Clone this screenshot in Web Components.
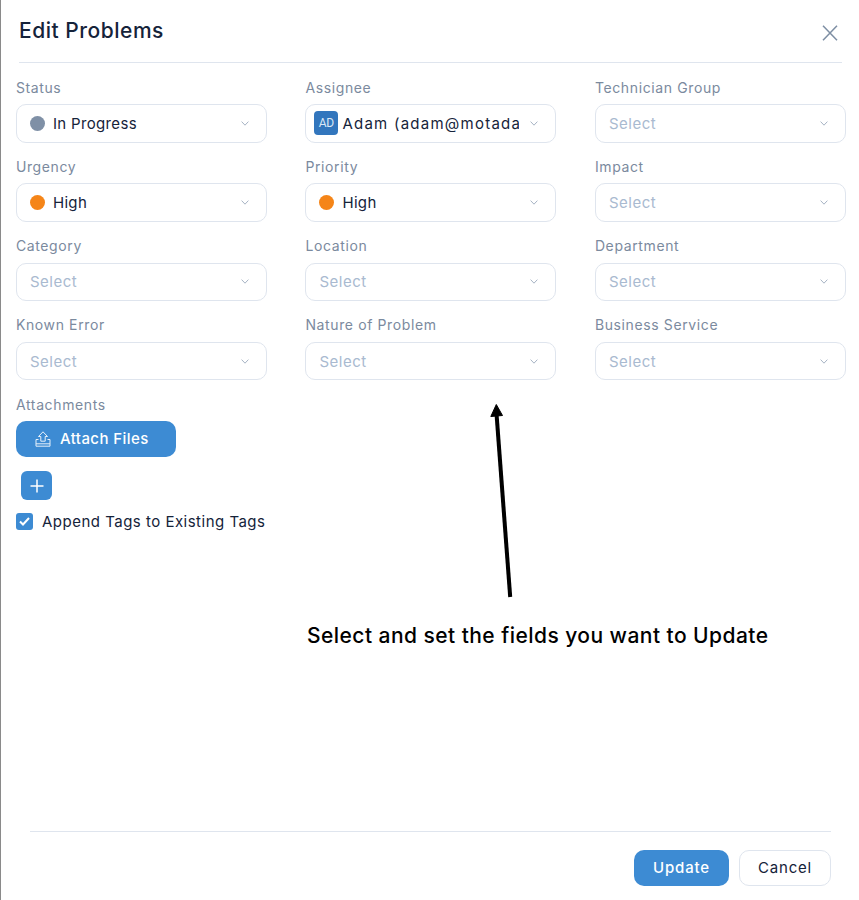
<!DOCTYPE html>
<html><head><meta charset="utf-8"><style>
html,body{margin:0;padding:0;background:#fff}
body{font-family:Inter,"Noto Sans",sans-serif;width:859px;height:900px;overflow:hidden}
</style></head><body>
<edit-dialog title="Edit Problems">
  <form-field label="Status" dot="#7f90a6" value="In Progress"></form-field>
  <form-field label="Assignee" avatar="AD" value="Adam (adam@motadata.com)" wide></form-field>
  <form-field label="Technician Group"></form-field>
  <form-field label="Urgency" dot="#f58518" value="High"></form-field>
  <form-field label="Priority" dot="#f58518" value="High"></form-field>
  <form-field label="Impact"></form-field>
  <form-field label="Category"></form-field>
  <form-field label="Location"></form-field>
  <form-field label="Department"></form-field>
  <form-field label="Known Error"></form-field>
  <form-field label="Nature of Problem"></form-field>
  <form-field label="Business Service"></form-field>
</edit-dialog>
<script>
const tpl=(html)=>{const t=document.createElement('template');t.innerHTML=html;return t};
function def(name,html,setup){
  const t=tpl(html);
  customElements.define(name,class extends HTMLElement{
    connectedCallback(){
      if(this.shadowRoot)return;
      const r=this.attachShadow({mode:'open'});
      r.appendChild(t.content.cloneNode(true));
      if(setup)setup(r,this);
    }
  });
}
def('form-field',`<style>
:host{display:block;height:79.3px}
.l{font-size:14px;line-height:21px;height:21px;color:#7b8a9e;letter-spacing:.62px;margin-top:-1.6px;padding-bottom:6.6px}
.b{box-sizing:border-box;height:38.4px;border:1px solid #dfe5ee;border-radius:10px;display:flex;align-items:center;padding:0 17px 0 13px;background:#fff}
.d{width:15px;height:15px;border-radius:50%;margin-right:8px;flex:none}
.a{width:24px;height:24px;border-radius:4px;background:#3276bd;color:#dbe8f6;font:12px/24px "Roboto",sans-serif;letter-spacing:-.3px;text-align:center;flex:none;margin:0 4px 0 -5px}
.v{flex:1;min-width:0;white-space:nowrap;overflow:hidden;font-size:15px;letter-spacing:.35px;color:#15233a;margin-right:11px}
:host([wide]) .v{letter-spacing:1.25px}
.v.p{color:#a9bad0;letter-spacing:.5px}
svg{flex:none;width:8px;height:5px}
</style><div class="l"></div><div class="b"><span class="d" hidden></span><span class="a" hidden></span><span class="v"></span>
<svg viewBox="0 0 8 5"><path d="M.6.6L4 4.200 7.400.6" fill="none" stroke="#a6b3c4" stroke-width="1"/></svg></div>`,(r,h)=>{
  r.querySelector('.l').textContent=h.getAttribute('label');
  const v=r.querySelector('.v'),val=h.getAttribute('value');
  v.textContent=val||'Select'; if(!val)v.classList.add('p');
  const d=r.querySelector('.d'),a=r.querySelector('.a'),dc=h.getAttribute('dot'),av=h.getAttribute('avatar');
  if(dc){d.hidden=false;d.style.background=dc}else d.style.display='none';
  if(av){a.hidden=false;a.textContent=av}else a.style.display='none';
});
def('x-btn',`<style>
:host{display:inline-flex;box-sizing:border-box;align-items:center;justify-content:center;border-radius:10px;font-size:15px;letter-spacing:.42px;background:#3d8bd3;color:#fff;font-weight:500}
:host([plain]){background:#fff;color:#15233a;border:1px solid #dfe5ee;font-weight:400}
</style><slot></slot>`);
def('edit-dialog',`<style>
:host{display:flex;flex-direction:column;position:relative;box-sizing:border-box;width:859px;height:900px;border-left:1px solid #8a8a8a;border-top-right-radius:14px;background:#fff;color:#15233a}
header{display:flex;align-items:center;justify-content:space-between;height:63px;box-sizing:border-box;margin:0 17px 0 18px;border-bottom:1px solid #dfe5ee;padding-right:4px}
h1{margin:0;font-size:21px;font-weight:500;letter-spacing:.52px;color:#15233a;position:relative;top:-1px}
.x{width:16px;height:16px;margin:4px 0 0 0}
.grid{display:grid;grid-template-columns:repeat(3,251px);column-gap:38.5px;padding:15.15px 0 0 14.9px}
.att{padding:0 0 0 15px;margin-top:-1px}
.att .l{font-size:14px;line-height:21px;color:#7b8a9e;letter-spacing:.62px;margin-bottom:6px}
.row{display:flex}
.attach{width:160px;height:36px;gap:9px;justify-content:flex-start;padding:0 0 1px 19px}
.attach svg{margin-top:1px}
.plus{width:31px;height:29px;margin:14px 0 0 5px;border-radius:6px;display:flex}
.chk{display:flex;align-items:center;margin-top:12.500px;font-size:15px;letter-spacing:.49px;color:#15233a;height:18px}
.cb{width:17px;height:17px;border-radius:3px;background:#3d8bd3;margin-right:9px;display:flex;align-items:center;justify-content:center}
footer{margin:auto 28px 0 29px;border-top:1px solid #dfe5ee;height:69px;box-sizing:border-box;display:flex;justify-content:flex-end;padding-top:18px;gap:10px}
.u{width:95px;height:36px;letter-spacing:.85px;padding-bottom:1px}.c{width:92px;height:36px;letter-spacing:.8px;padding-bottom:1px}
.note{position:absolute;left:306px;top:622px;font-size:21px;font-weight:500;line-height:28px;color:#000;letter-spacing:.45px;white-space:nowrap}
.arrow{position:absolute;left:480px;top:395px;width:50px;height:210px}
</style>
<header><h1 id="t"></h1><svg class="x" viewBox="0 0 16 16"><path d="M1 .8l14 14.400M15 .8L1 15.200" stroke="#7d8ea3" stroke-width="1.500" fill="none"/></svg></header>
<div class="grid"><slot></slot></div>
<div class="att"><div class="l">Attachments</div>
<div class="row"><x-btn class="attach"><svg width="16" height="16" viewBox="0 0 16 16"><path d="M8 .8L3.500 5.500H5.800V10.200H10.200V5.500H12.500ZM3.500 8.500H1V15.200H15V8.500H12.500M1 12.800H15" fill="none" stroke="#e6f0fa" stroke-width="1"/></svg>Attach Files</x-btn></div>
<x-btn class="plus"><svg width="14" height="14" viewBox="0 0 14 14"><path d="M7 .5v13M.5 7h13" stroke="#fff" stroke-width="1.500"/></svg></x-btn>
<div class="chk"><span class="cb"><svg width="11" height="9" viewBox="0 0 11 9"><path d="M1 4.500l3 3 6-6.500" fill="none" stroke="#fff" stroke-width="2"/></svg></span>Append Tags to Existing Tags</div></div>
<svg class="arrow" viewBox="0 0 50 210"><path d="M29.200 202L15.600 20" stroke="#000" stroke-width="4" fill="none"/><path d="M15.300 9.500L9.800 21.500L21.500 20.500Z" fill="#000" stroke="#000"/></svg>
<div class="note">Select and set the fields you want to Update</div>
<footer><x-btn class="u">Update</x-btn><x-btn class="c" plain>Cancel</x-btn></footer>`,(r,h)=>{r.getElementById('t').textContent=h.getAttribute('title')});
</script></body></html>
